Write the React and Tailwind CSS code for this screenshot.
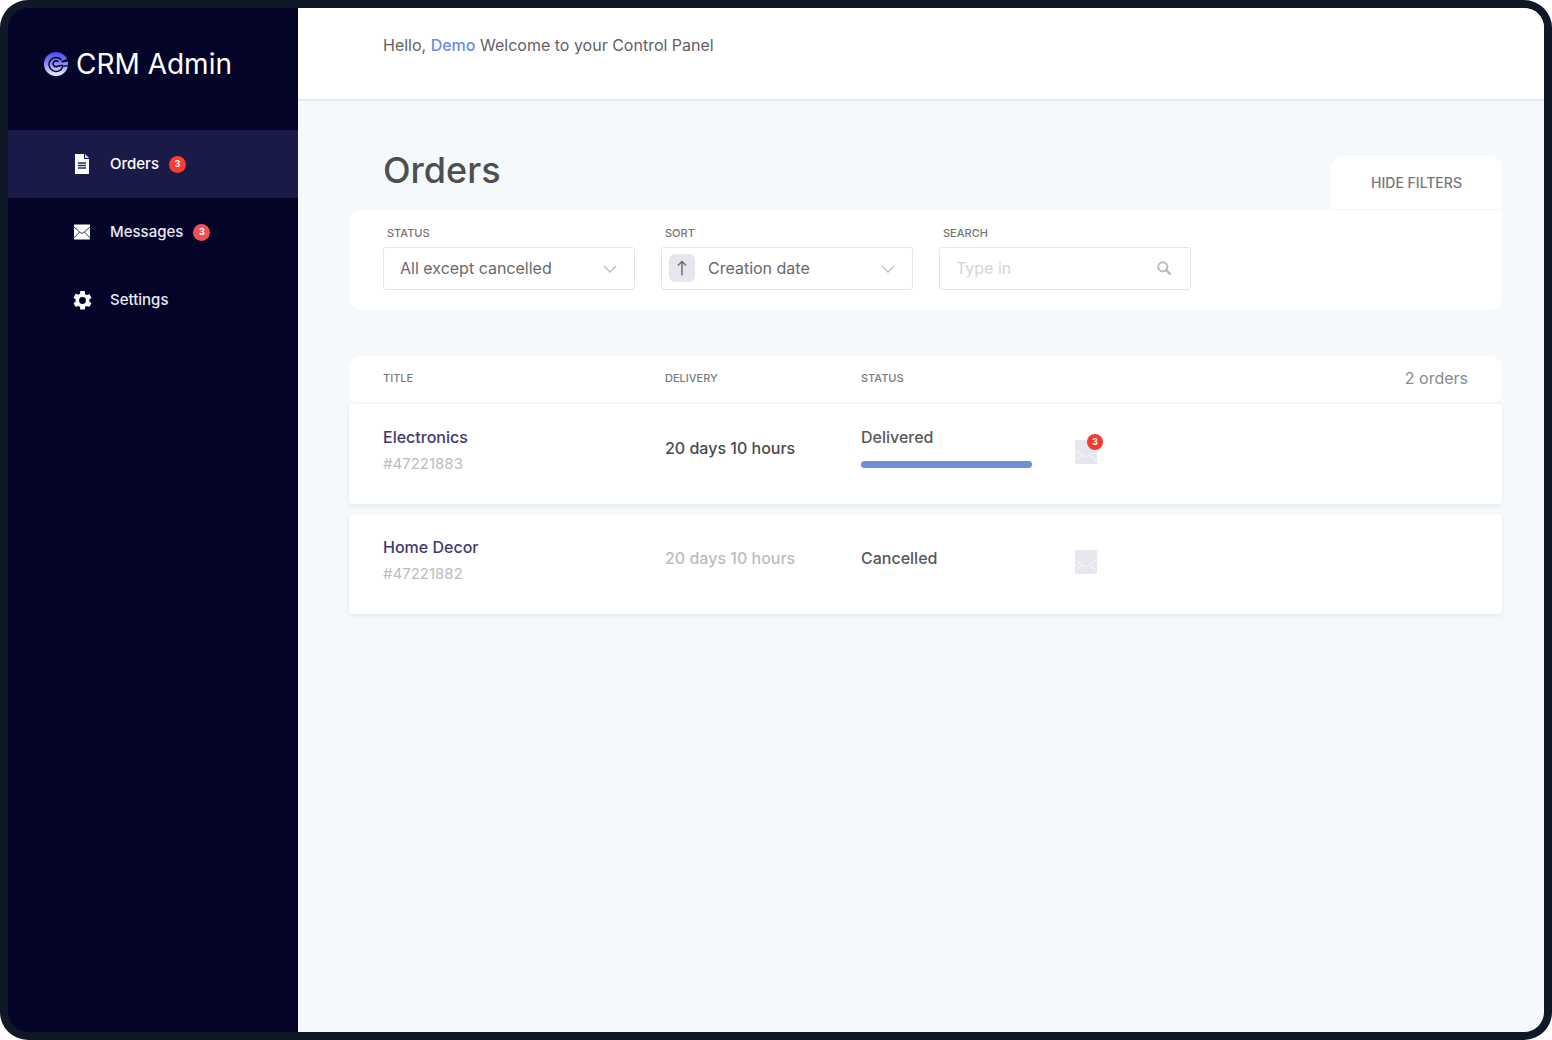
import React, { useState } from "react";

function LogoMark() {
  return (
    <svg viewBox="0 0 24 24" className="size-6 shrink-0" aria-hidden="true">
      <defs>
        <linearGradient id="logo-fill" x1="0" y1="0" x2="0" y2="1">
          <stop offset="0" stopColor="#4a48ee" />
          <stop offset="0.45" stopColor="#8583f6" />
          <stop offset="1" stopColor="#f1f1ff" />
        </linearGradient>
      </defs>
      <circle cx="12" cy="12" r="12" fill="url(#logo-fill)" />
      <path d="M17 9.2 L21.5 7.4 L25 6.6 L25 9.4 L18 10.6 Z" fill="#040428" />
      <path
        d="M17.6 8.2 A7 7 0 1 0 18.8 14.2 L24 13.6"
        fill="none"
        stroke="#040428"
        strokeWidth="1.4"
      />
      <path
        d="M14.4 9.8 A3 3 0 1 0 14.2 13.9 L19 13.2"
        fill="none"
        stroke="#040428"
        strokeWidth="1.6"
      />
    </svg>
  );
}

function OrdersIcon() {
  return (
    <svg viewBox="0 0 16 20" className="h-5 w-4" aria-hidden="true">
      <path d="M1 0h9v5h5v15H1z" fill="#fff" />
      <path d="M11 0l4 4h-4z" fill="#d9d9ec" />
      <path d="M4 9h8M4 11.5h8M4 14h8" stroke="#2a2a55" strokeWidth="1.4" />
    </svg>
  );
}

function MessagesIcon() {
  return (
    <svg viewBox="0 0 16 15" className="h-4 w-4" aria-hidden="true">
      <path d="M0 0h16v15H0z" fill="#fff" />
      <path
        d="M0 2.5l6.4 5.6a2.4 2.4 0 0 0 3.2 0L16 2.5M0 13.4l5.4-5.8M16 13.4l-5.4-5.8"
        fill="none"
        stroke="#23234f"
        strokeWidth="0.9"
      />
    </svg>
  );
}

function SettingsIcon() {
  return (
    <svg viewBox="2 2 20 20" className="size-[19px]" aria-hidden="true">
      <path
        fill="#fff"
        d="M19.14 12.94c.04-.3.06-.61.06-.94 0-.32-.02-.64-.07-.94l2.03-1.58a.49.49 0 0 0 .12-.61l-1.92-3.32a.49.49 0 0 0-.59-.22l-2.39.96c-.5-.38-1.03-.7-1.62-.94l-.36-2.54A.48.48 0 0 0 13.92 2h-3.84a.47.47 0 0 0-.47.41l-.36 2.54c-.59.24-1.13.57-1.62.94l-2.39-.96a.48.48 0 0 0-.59.22L2.74 8.87c-.12.21-.08.47.12.61l2.03 1.58c-.05.3-.09.63-.09.94s.02.64.07.94l-2.03 1.58a.49.49 0 0 0-.12.61l1.92 3.32c.12.22.37.29.59.22l2.39-.96c.5.38 1.03.7 1.62.94l.36 2.54c.05.24.24.41.48.41h3.84c.24 0 .44-.17.47-.41l.36-2.54c.59-.24 1.13-.56 1.62-.94l2.39.96c.22.08.47 0 .59-.22l1.92-3.32a.47.47 0 0 0-.12-.61zM12 15.6a3.6 3.6 0 1 1 0-7.2 3.6 3.6 0 0 1 0 7.2z"
      />
    </svg>
  );
}

function Chevron() {
  return (
    <svg
      viewBox="0 0 14 8"
      className="pointer-events-none absolute top-[18px] right-[18px] h-2 w-3.5"
      aria-hidden="true"
    >
      <path d="M1 1l6 6 6-6" fill="none" stroke="#bfc0c8" strokeWidth="1.5" />
    </svg>
  );
}

function RowMailIcon() {
  return (
    <svg viewBox="0 0 22 24" className="h-6 w-[22px]" aria-hidden="true">
      <rect width="22" height="24" rx="1" fill="#e6e6ee" />
      <path
        d="M1 10l7.5 5.6a4 4 0 0 0 5 0L21 10M1 20l7-5M21 20l-7-5"
        fill="none"
        stroke="#f8f8fc"
        strokeWidth="1"
      />
    </svg>
  );
}

const navItems = [
  { label: "Orders", Icon: OrdersIcon, count: 3, active: true, badge: "bg-[#fa3e36]" },
  { label: "Messages", Icon: MessagesIcon, count: 3, badge: "bg-[#ee5153]" },
  { label: "Settings", Icon: SettingsIcon },
];

const orders = [
  { title: "Electronics", id: "#47221883", delivery: "20 days 10 hours", status: "Delivered", done: true, unread: 3 },
  { title: "Home Decor", id: "#47221882", delivery: "20 days 10 hours", status: "Cancelled" },
];

const fieldBox =
  "h-[43px] w-full appearance-none rounded-[3px] border border-[#e4e5ea] bg-white pb-0.5 text-base text-[#6a6a6c] outline-none";
const fieldLabel = "block pl-1 text-[11px] leading-4 font-medium text-[#747476]";
const columns = "grid grid-cols-[282px_196px_214px_1fr] px-[34px]";
const headCell = "text-left text-[11px] font-medium text-[#7a7a7c]";

function Sidebar() {
  return (
    <aside className="w-[290px] shrink-0 bg-[#040428]">
      <div className="h-[122px] pt-9 pl-9">
        <a href="#home" className="flex h-10 items-center gap-2 text-[28px] text-white">
          <LogoMark />
          CRM Admin
        </a>
      </div>
      <nav>
        {navItems.map(({ label, Icon, count, active, badge }) => (
          <a
            key={label}
            href={"#" + label.toLowerCase()}
            className={
              "flex h-[68px] items-center pl-16 text-[15px] font-medium " +
              (active ? "bg-[#1a1a49] text-white" : "text-[#e9e9f4]")
            }
          >
            <span className="mr-[18px] flex w-5 justify-center">
              <Icon />
            </span>
            {label}
            {count && (
              <span
                className={
                  "ml-2.5 flex size-[17px] items-center justify-center rounded-full text-[9px] font-bold text-white " +
                  badge
                }
              >
                {count}
              </span>
            )}
          </a>
        ))}
      </nav>
    </aside>
  );
}

function Filters() {
  return (
    <form
      className="flex gap-[26px] rounded-xl rounded-tr-none bg-white px-[34px] pt-[15px] pb-5"
      onSubmit={(e) => e.preventDefault()}
    >
      <div className="w-[252px]">
        <label htmlFor="status" className={fieldLabel}>
          STATUS
        </label>
        <div className="relative mt-1.5">
          <select id="status" className={fieldBox + " px-4"}>
            <option>All except cancelled</option>
            <option>All</option>
          </select>
          <Chevron />
        </div>
      </div>
      <div className="w-[252px]">
        <label htmlFor="sort" className={fieldLabel}>
          SORT
        </label>
        <div className="relative mt-1.5">
          <select id="sort" className={fieldBox + " pr-4 pl-[46px]"}>
            <option>Creation date</option>
            <option>Title</option>
          </select>
          <button
            type="button"
            aria-label="Ascending order"
            className="absolute top-[7px] left-2 flex h-7 w-[26px] items-center justify-center rounded-md bg-[#e6e6ee]"
          >
            <svg viewBox="0 0 10 16" className="h-4 w-2.5" aria-hidden="true">
              <path d="M5 15.5V1.5M1 5.5l4-4 4 4" fill="none" stroke="#67676f" strokeWidth="1.4" />
            </svg>
          </button>
          <Chevron />
        </div>
      </div>
      <div className="w-[252px]">
        <label htmlFor="search" className={fieldLabel}>
          SEARCH
        </label>
        <div className="relative mt-1.5">
          <input
            id="search"
            type="text"
            placeholder="Type in"
            className={fieldBox + " pr-10 pl-4 placeholder:text-[#d5d5da]"}
          />
          <svg
            viewBox="0 0 14 14"
            className="pointer-events-none absolute top-3.5 right-5 size-3.5"
            aria-hidden="true"
          >
            <circle cx="5.8" cy="5.8" r="4.6" fill="none" stroke="#b9bac0" strokeWidth="1.9" />
            <path d="M9.2 9.2l3.8 3.8" stroke="#b9bac0" strokeWidth="2.4" strokeLinecap="round" />
          </svg>
        </div>
      </div>
    </form>
  );
}

function OrdersTable() {
  return (
    <table className="mt-[46px] block">
      <thead className="block">
        <tr className={columns + " h-[46px] items-center rounded-xl rounded-b-lg bg-white pb-0.5"}>
          <th className={headCell}>TITLE</th>
          <th className={headCell}>DELIVERY</th>
          <th className={headCell}>STATUS</th>
          <th className="text-right text-base font-normal text-[#8a8a8c]">{orders.length} orders</th>
        </tr>
      </thead>
      <tbody className="mt-0.5 flex flex-col gap-[10px]">
        {orders.map((o) => (
          <tr
            key={o.id}
            className={columns + " h-[100px] rounded-[4px] bg-white shadow-[0_2px_5px_rgba(60,80,80,0.09)]"}
          >
            <td className="pt-[21px] leading-6">
              <a href={"#order-" + o.id.slice(1)} className="block font-medium text-[#403a72]">
                {o.title}
              </a>
              <div className="mt-[3px] text-[15px] text-[#bcbcbe]">{o.id}</div>
            </td>
            <td className={"pt-8 leading-6 font-medium " + (o.done ? "text-[#4a4a4c]" : "text-[#bcbcbe]")}>
              {o.delivery}
            </td>
            <td className={"leading-6 font-medium text-[#58585a] " + (o.done ? "pt-[21px]" : "pt-8")}>
              {o.status}
              {o.done && <div className="mt-3 h-[7px] w-[171px] rounded-full bg-[#6c8fdc]" />}
            </td>
            <td className="pt-9">
              <button type="button" aria-label="Messages" className="relative block">
                <RowMailIcon />
                {o.unread && (
                  <span className="absolute -top-1.5 -right-1.5 flex size-4 items-center justify-center rounded-full bg-[#f43a30] text-[9px] font-bold text-white">
                    {o.unread}
                  </span>
                )}
              </button>
            </td>
          </tr>
        ))}
      </tbody>
    </table>
  );
}

export default function App() {
  const [open, setOpen] = useState(true);
  return (
    <div className="bg-white font-['Inter',sans-serif] text-base">
      <div className="flex min-h-screen rounded-[28px] bg-[#0e1826] p-2">
        <div className="flex flex-1 overflow-hidden rounded-[20px]">
          <Sidebar />
          <div className="min-w-0 flex-1 bg-[#f5f9fc]">
            <header className="h-[93px] border-b-2 border-[#e6e9ee] bg-white pt-[25px] pl-[85px] leading-6 text-[#626264]">
              Hello,{" "}
              <a href="#profile" className="font-medium text-[#6a8cec]">
                Demo
              </a>{" "}
              Welcome to your Control Panel
            </header>
            <main className="pt-[55px] pr-[42px] pl-[51px]">
              <div className="flex items-start justify-between pl-[34px]">
                <h1 className="text-[36px] leading-7 font-medium text-[#4d4f50]">Orders</h1>
                <button
                  type="button"
                  onClick={() => setOpen(!open)}
                  className="h-[54px] w-[171px] rounded-t-xl border-b border-[#f5f6f8] bg-white text-sm font-medium text-[#77777a]"
                >
                  {open ? "HIDE FILTERS" : "SHOW FILTERS"}
                </button>
              </div>
              {open && <Filters />}
              <OrdersTable />
            </main>
          </div>
        </div>
      </div>
    </div>
  );
}
